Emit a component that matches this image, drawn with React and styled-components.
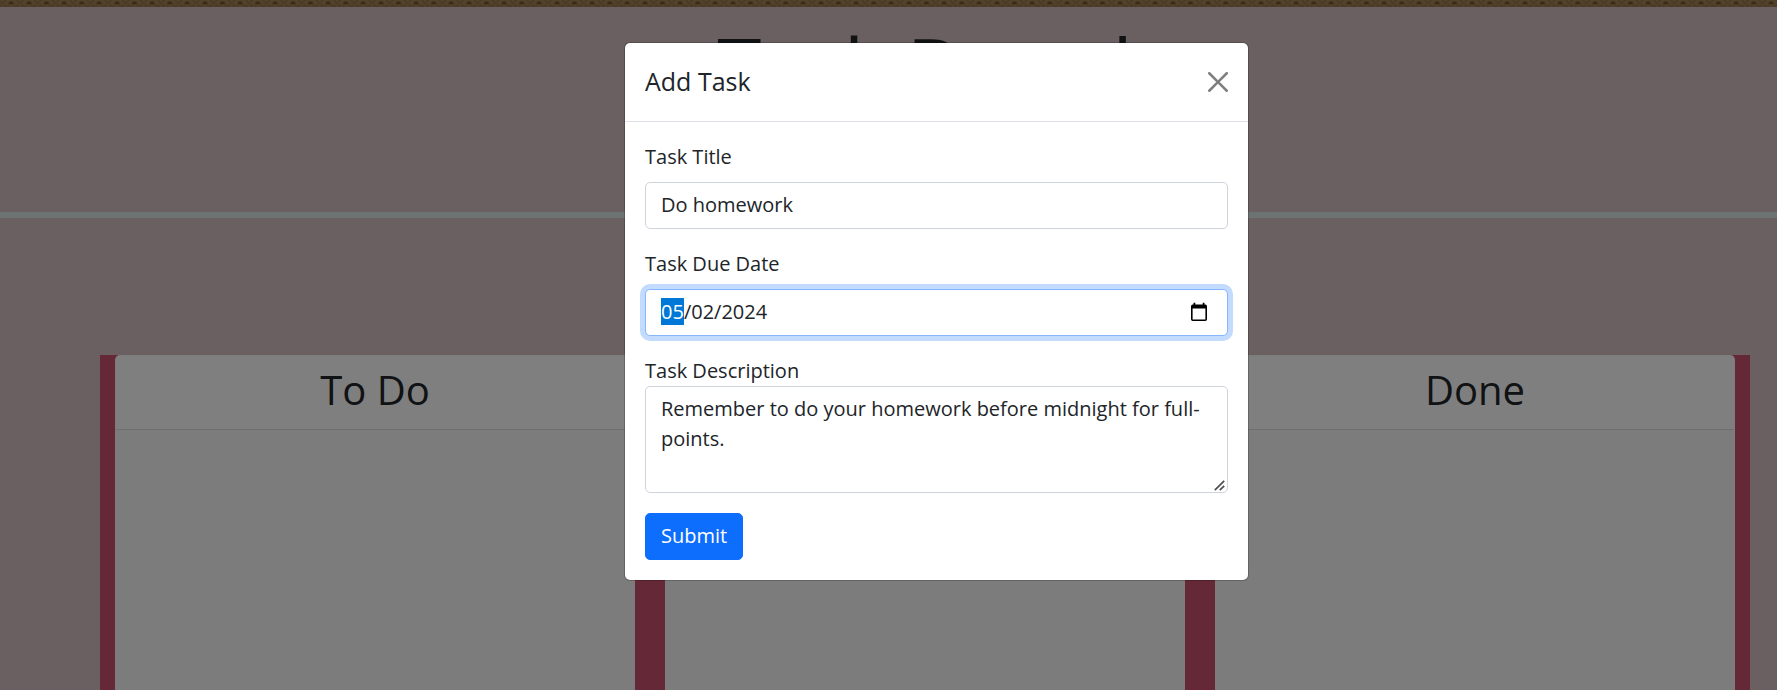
import React from "react";
import styled, { createGlobalStyle } from "styled-components";

const GlobalStyle = createGlobalStyle`
  *, *::before, *::after { box-sizing: border-box; }
  html { font-size: 20px; }
  body {
    margin: 0;
    height: 690px;
    overflow: hidden;
    font-family: "Open Sans", sans-serif;
    font-size: 20px;
    line-height: 1.5;
    color: #212529;
    background: #d6c0c2;
  }
`;

const Viewport = styled.div`
  position: relative;
  width: 100%;
  height: 690px;
  overflow: hidden;
`;

const Page = styled.div`
  display: flex;
  flex-direction: column;
  width: 1850px;
  height: 690px;
  background: #d6c0c2;
`;

const PatternStrip = styled.svg`
  display: block;
  flex: none;
  width: 100%;
  height: 7px;
`;

const Masthead = styled.header`
  flex: none;
  height: 211px;
  border-bottom: 6px solid #dae5e7;
  text-align: center;
`;

const SiteTitle = styled.h1`
  margin: 0;
  padding-top: 11px;
  font-size: 80px;
  font-weight: 400;
  line-height: 1.2;
`;

const Board = styled.main`
  display: flex;
  flex: 1;
  width: 1650px;
  margin: 137px auto 0;
`;

const Lane = styled.section`
  flex: 1;
  padding: 0 15px;
  background: #ca506e;
`;

const Card = styled.div`
  height: 100%;
  border: 1px solid #f8f9fa;
  border-bottom: 0;
  border-radius: 5px 5px 0 0;
  background: #f8f9fa;
`;

const CardHeader = styled.div`
  height: 74px;
  padding-top: 10px;
  border-bottom: 1px solid #dfdfdf;
  border-radius: 4px 4px 0 0;
  background: #fff;
  text-align: center;
`;

const CardTitle = styled.h2`
  margin: 0;
  font-size: 40px;
  font-weight: 400;
  line-height: 1.2;
`;

const Backdrop = styled.div`
  position: absolute;
  inset: 0;
  background: rgba(0, 0, 0, 0.5);
`;

const Dialog = styled.div`
  position: absolute;
  top: 42px;
  left: 624px;
  width: 625px;
  border: 1px solid rgba(0, 0, 0, 0.2);
  border-radius: 6px;
  background: #fff;
  background-clip: padding-box;
`;

const DialogHeader = styled.div`
  display: flex;
  align-items: center;
  justify-content: space-between;
  height: 79px;
  padding: 0 20px;
  border-bottom: 1px solid #dee2e6;
`;

const DialogTitle = styled.h5`
  margin: 0;
  font-size: 25px;
  font-weight: 400;
`;

const CloseButton = styled.button`
  display: flex;
  padding: 0;
  border: 0;
  background: none;
  opacity: 0.5;
`;

const Form = styled.form`
  padding: 20px;
`;

const Field = styled.div`
  position: relative;
  margin-bottom: 20px;
`;

const Label = styled.label`
  display: block;
  margin-bottom: ${(p) => (p.$tight ? 0 : "10px")};
`;

const Control = styled.div`
  display: flex;
  align-items: center;
  height: 47px;
  padding: 0 15px 1px;
  border: 1px solid ${(p) => (p.$focused ? "#86b7fe" : "#ced4da")};
  border-radius: 5px;
  box-shadow: ${(p) => (p.$focused ? "0 0 0 5px rgba(13, 110, 253, 0.25)" : "none")};
  background: #fff;
`;

const SelectedPart = styled.span`
  background: #0078d7;
  color: #fff;
`;

const CalendarIcon = styled.svg`
  margin-left: auto;
  margin-right: 3px;
`;

const TextArea = styled.textarea`
  display: block;
  width: 100%;
  height: 107px;
  padding: 7px 15px;
  border: 1px solid #ced4da;
  border-radius: 5px;
  outline: 0;
  resize: none;
  overflow: hidden;
  font: inherit;
  color: inherit;
`;

const ResizeGrip = styled.svg`
  position: absolute;
  right: 3px;
  bottom: 2px;
`;

const SubmitButton = styled.button`
  display: block;
  height: 47px;
  padding: 0 15px 2px;
  border: 1px solid #0d6efd;
  border-radius: 5px;
  background: #0d6efd;
  color: #fff;
  font: inherit;
`;

const lanes = ["To Do", "In Progress", "Done"];

export default function App() {
  return (
    <Viewport>
      <GlobalStyle />
      <Page>
        <PatternStrip aria-hidden="true">
          <defs>
            <pattern id="weave" width="17.6" height="7" patternUnits="userSpaceOnUse" x="2.5">
              <rect width="17.6" height="7" fill="#a68456" />
              <path d="M-1 5 4 -1M4 8 9 2 14 8M13.6 -1 18.6 5" stroke="#957549" strokeWidth="1.6" fill="none" />
              <ellipse cx="8.8" cy="3" rx="2.6" ry="1.4" fill="#735735" />
              <circle cx="2.5" cy="5.7" r="1.1" fill="#8a6b41" />
              <circle cx="15.1" cy="5.7" r="1.1" fill="#8a6b41" />
            </pattern>
          </defs>
          <rect width="100%" height="7" fill="url(#weave)" />
        </PatternStrip>
        <Masthead>
          <SiteTitle>Task Board</SiteTitle>
        </Masthead>
        <Board>
          {lanes.map((name) => (
            <Lane key={name}>
              <Card>
                <CardHeader>
                  <CardTitle>{name}</CardTitle>
                </CardHeader>
              </Card>
            </Lane>
          ))}
        </Board>
      </Page>
      <Backdrop />
      <Dialog role="dialog">
        <DialogHeader>
          <DialogTitle>Add Task</DialogTitle>
          <CloseButton aria-label="Close">
            <svg width="20" height="20" viewBox="0 0 16 16" fill="#000">
              <path d="M.293.293a1 1 0 011.414 0L8 6.586 14.293.293a1 1 0 111.414 1.414L9.414 8l6.293 6.293a1 1 0 01-1.414 1.414L8 9.414l-6.293 6.293a1 1 0 01-1.414-1.414L6.586 8 .293 1.707a1 1 0 010-1.414z" />
            </svg>
          </CloseButton>
        </DialogHeader>
        <Form>
          <Field>
            <Label>Task Title</Label>
            <Control>Do homework</Control>
          </Field>
          <Field>
            <Label>Task Due Date</Label>
            <Control $focused>
              <span>
                <SelectedPart>05</SelectedPart>/02/2024
              </span>
              <CalendarIcon width="20" height="20" viewBox="0 0 20 20">
                <path
                  fillRule="evenodd"
                  d="M4.5 .8h1.8v1.7h7.4V.8h1.8v1.7h.8A1.7 1.7 0 0 1 18 4.2V17.3A1.7 1.7 0 0 1 16.3 19H3.7A1.7 1.7 0 0 1 2 17.3V4.2A1.7 1.7 0 0 1 3.7 2.5h.8zM3.6 6.5v10.9h12.8V6.5z"
                />
              </CalendarIcon>
            </Control>
          </Field>
          <Field>
            <Label $tight>Task Description</Label>
            <TextArea
              readOnly
              value="Remember to do your homework before midnight for full-points."
            />
            <ResizeGrip width="11" height="11" viewBox="0 0 11 11" stroke="#505050" strokeWidth="1.7">
              <path d="M.8 10.2 10.2 .8M5.8 10.2 10.2 5.8" />
            </ResizeGrip>
          </Field>
          <SubmitButton type="button">Submit</SubmitButton>
        </Form>
      </Dialog>
    </Viewport>
  );
}
